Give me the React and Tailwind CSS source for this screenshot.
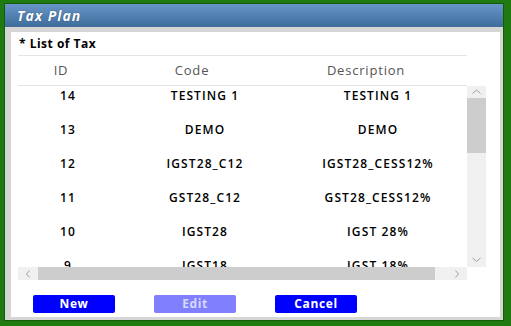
import React from "react";

const rows = [
  ["14", "TESTING 1", "TESTING 1"],
  ["13", "DEMO", "DEMO"],
  ["12", "IGST28_C12", "IGST28_CESS12%"],
  ["11", "GST28_C12", "GST28_CESS12%"],
  ["10", "IGST28", "IGST 28%"],
  ["9", "IGST18", "IGST 18%"],
];

export default function App() {
  return (
    <div
      className="w-[511px] h-[326px] bg-[#1f7a10] pl-[5px] pt-[4px] pr-[8px] pb-[6px]"
      style={{ fontFamily: '"Open Sans", "Noto Sans", sans-serif' }}
    >
      <div className="w-full h-full flex flex-col shadow-[0_0_0_1px_#155c08]">
        <div className="h-[23px] bg-gradient-to-b from-[#6896c8] to-[#3e6d9c] flex items-center pl-[12px]">
          <span className="text-white text-[14px] tracking-[1px] font-bold italic leading-none [text-shadow:0_0_1px_#1d3d60]">
            Tax Plan
          </span>
        </div>
        <div className="flex-1 bg-[#d6d6d6] pl-[6px] pt-[5px] pr-[3px] pb-[3px]">
          <div className="w-full h-full bg-white flex flex-col px-[7px]">
            <div className="h-[23px] flex items-center pl-[1px] pt-[1px] text-[12px] tracking-[0.5px] font-bold text-black leading-none">
              * List of Tax
            </div>
            <div className="w-[449px] h-[1px] bg-[#e4e4e4]" />
            <div className="w-[449px] h-[29px] flex items-center text-[13px] tracking-[0.8px] text-[#555] leading-none">
              <div className="w-[86px] text-center">ID</div>
              <div className="w-[176px] text-center">Code</div>
              <div className="w-[172px] text-center">Description</div>
            </div>
            <div className="w-[449px] h-[1px] bg-[#e4e4e4]" />
            <div className="flex w-[468px]">
              <div className="w-[449px] flex flex-col">
                <div className="h-[181px] overflow-hidden">
                  <div className="-mt-[7px]">
                    {rows.map((r) => (
                      <div
                        key={r[0]}
                        className="h-[34px] flex items-center text-[12px] tracking-[1.1px] font-semibold text-black leading-none"
                      >
                        <div className="w-[100px] text-center">{r[0]}</div>
                        <div className="w-[174px] text-center">{r[1]}</div>
                        <div className="w-[172px] text-center">{r[2]}</div>
                      </div>
                    ))}
                  </div>
                </div>
                <div className="h-[13px] flex bg-[#f0f0f0]">
                  <div className="w-[20px] flex items-center justify-center">
                    <svg width="6" height="8" viewBox="0 0 6 8">
                      <path d="M4.5 0.5 L1.5 4 L4.5 7.5" fill="none" stroke="#a0a0a0" strokeWidth="1" />
                    </svg>
                  </div>
                  <div className="w-[397px] bg-[#cdcdcd]" />
                  <div className="flex-1 flex items-center justify-end pr-[7px]">
                    <svg width="6" height="8" viewBox="0 0 6 8">
                      <path d="M1.5 0.5 L4.5 4 L1.5 7.5" fill="none" stroke="#a0a0a0" strokeWidth="1" />
                    </svg>
                  </div>
                </div>
              </div>
              <div className="w-[19px] h-[181px] bg-[#f0f0f0] flex flex-col">
                <div className="h-[12px] flex items-center justify-center">
                  <svg width="9" height="6" viewBox="0 0 9 6">
                    <path d="M0.5 4.5 L4.5 1 L8.5 4.5" fill="none" stroke="#a0a0a0" strokeWidth="1" />
                  </svg>
                </div>
                <div className="h-[55px] bg-[#cdcdcd]" />
                <div className="flex-1" />
                <div className="h-[14px] flex items-center justify-center">
                  <svg width="9" height="6" viewBox="0 0 9 6">
                    <path d="M0.5 1 L4.5 4.5 L8.5 1" fill="none" stroke="#a0a0a0" strokeWidth="1" />
                  </svg>
                </div>
              </div>
            </div>
            <div className="flex pt-[15px] pl-[15px]">
              <button className="w-[82px] h-[18px] bg-[#0000ff] rounded-[2px] text-white text-[12px] tracking-[0.6px] font-bold leading-none">
                New
              </button>
              <button className="ml-[39px] w-[82px] h-[18px] bg-[#8080ff] rounded-[2px] text-[#d8d8ff] text-[12px] tracking-[0.6px] font-bold leading-none">
                Edit
              </button>
              <button className="ml-[39px] w-[82px] h-[18px] bg-[#0000ff] rounded-[2px] text-white text-[12px] tracking-[0.6px] font-bold leading-none">
                Cancel
              </button>
            </div>
          </div>
        </div>
      </div>
    </div>
  );
}
